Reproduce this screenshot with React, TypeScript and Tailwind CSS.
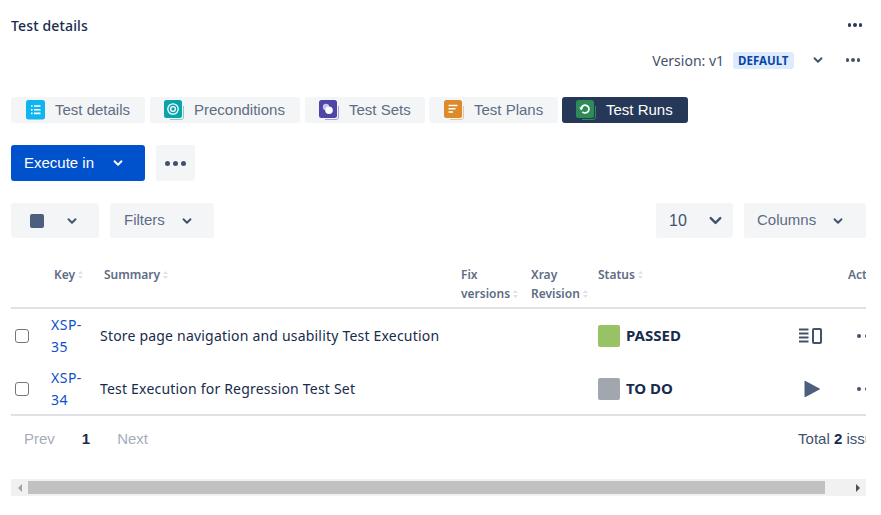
import { ChevronDown } from "lucide-react";

const uiFont = "font-['Liberation_Sans',Arial,sans-serif]";
const bodyFont = "font-['Noto_Sans','Open_Sans',sans-serif]";

function Dots({ className = "" }: { className?: string }) {
  return (
    <span className={`flex items-center gap-[2px] ${className}`}>
      <i className="block w-[3.5px] h-[3.5px] rounded-full bg-current" />
      <i className="block w-[3.5px] h-[3.5px] rounded-full bg-current" />
      <i className="block w-[3.5px] h-[3.5px] rounded-full bg-current" />
    </span>
  );
}

function Chevron({ className = "" }: { className?: string }) {
  return <ChevronDown className={`w-[14px] h-[14px] ${className}`} strokeWidth={3.2} />;
}

function SortArrows() {
  return (
    <svg width="7" height="10" viewBox="0 0 7 10" className="inline-block ml-[2px] align-[-1px]">
      <path d="M3.5 1 L6 4 H1 Z" fill="#dfe1e6" />
      <path d="M3.5 9 L6 6 H1 Z" fill="#dfe1e6" />
    </svg>
  );
}

function TabIcon({ color, shadow, children }: { color: string; shadow: string; children: React.ReactNode }) {
  return (
    <svg width="21" height="21" viewBox="0 0 21 21" className="shrink-0">
      <path d="M19.5 6 V17 a2.5 2.5 0 0 1 -2.5 2.5 H6" fill="none" stroke={shadow} strokeWidth="1" />
      <rect x="0" y="0" width="18" height="18" rx="2.5" fill={color} />
      {children}
    </svg>
  );
}

const tabs = [
  {
    label: "Test details",
    width: "w-[134px]",
    gap: "gap-[10px]",
    pl: "pl-[15px]",
    icon: (
      <svg width="19" height="20" viewBox="0 0 19 20" className="shrink-0">
        <rect x="0" y="0" width="19" height="19.5" rx="2.5" fill="#0fb5ee" />
        <path d="M5 6h1.6M8 6h6.5M5 9.7h1.6M8 9.7h6.5M5 13.4h1.6M8 13.4h6.5" stroke="#fff" strokeWidth="1.6" />
      </svg>
    ),
  },
  {
    label: "Preconditions",
    width: "w-[150px]",
    gap: "gap-[9px]",
    pl: "pl-[14px]",
    icon: (
      <TabIcon color="#0aa3a8" shadow="#7fcfd2">
        <circle cx="9" cy="9" r="5.2" fill="none" stroke="#fff" strokeWidth="1.3" />
        <circle cx="9" cy="9" r="2.4" fill="none" stroke="#fff" strokeWidth="1.3" />
      </TabIcon>
    ),
  },
  {
    label: "Test Sets",
    width: "w-[120px]",
    gap: "gap-[9px]",
    pl: "pl-[14px]",
    icon: (
      <TabIcon color="#4f46a5" shadow="#a9a4d8">
        <circle cx="7" cy="7" r="3.2" fill="#c9c6ea" />
        <circle cx="10" cy="10.2" r="3.8" fill="#fff" />
      </TabIcon>
    ),
  },
  {
    label: "Test Plans",
    width: "w-[129px]",
    gap: "gap-[9px]",
    pl: "pl-[15px]",
    icon: (
      <TabIcon color="#dc8a2b" shadow="#eec48f">
        <path d="M4.5 5.5h9M4.5 8.7h7M4.5 11.9h4.5" stroke="#fff" strokeWidth="1.5" />
      </TabIcon>
    ),
  },
  {
    label: "Test Runs",
    width: "w-[126px]",
    gap: "gap-[9px]",
    pl: "pl-[14px]",
    active: true,
    icon: (
      <TabIcon color="#2e8b57" shadow="#2e8b57">
        <path d="M5.2 9a3.9 3.9 0 1 1 1.2 2.9" fill="none" stroke="#fff" strokeWidth="1.7" />
        <path d="M3.2 7.6 L7.3 7.6 L5.2 10.4 Z" fill="#fff" />
      </TabIcon>
    ),
  },
];

const rowGrid = "grid grid-cols-[40px_49px_358px_70px_67px_201px_49px_60px] w-[894px]";

function DetailIcon() {
  return (
    <svg width="23" height="16" viewBox="0 0 23 16">
      <path d="M0 1.5h9.5M0 5.5h9.5M0 9.5h9.5M0 13.5h9.5" stroke="#42526e" strokeWidth="2" fill="none" />
      <rect x="14" y="1" width="8" height="14" rx="1" fill="none" stroke="#42526e" strokeWidth="2" />
    </svg>
  );
}

function PlayIcon() {
  return (
    <svg width="18" height="18" viewBox="0 0 18 18">
      <path d="M1.5 1.5 a.7.7 0 0 1 1-.6 L16.5 8.4 a.7.7 0 0 1 0 1.2 L2.5 17.1 a.7.7 0 0 1 -1-.6 Z" fill="#4c5f7d" />
    </svg>
  );
}

const rows = [
  {
    key: ["XSP-", "35"],
    summary: "Store page navigation and usability Test Execution",
    status: "PASSED",
    color: "bg-[#98c364]",
    action: <DetailIcon />,
    actionPl: "pl-[3px]",
  },
  {
    key: ["XSP-", "34"],
    summary: "Test Execution for Regression Test Set",
    status: "TO DO",
    color: "bg-[#a2a6af]",
    action: <PlayIcon />,
    actionPl: "pl-[7px]",
  },
];

export default function App() {
  return (
    <div className={`w-[881px] h-[515px] overflow-hidden bg-white pl-[11px] pr-[15px] ${uiFont}`}>
      {/* header */}
      <div className="h-[52px] pt-[16px] flex items-start justify-between">
        <span className={`text-[14px] leading-[20px] font-medium tracking-[0.15px] text-[#172b4d] ${bodyFont}`}>Test details</span>
        <Dots className="text-[#253858] mr-[4px] mt-[7px]" />
      </div>

      {/* version row */}
      <div className="h-[45px] -mt-[2px] flex items-start justify-end">
        <div className="flex items-center h-[20px]">
          <span className={`text-[14px] text-[#42526e] ${bodyFont}`}>Version: v1</span>
          <span className={`ml-[9px] px-[5px] h-[17px] leading-[17px] rounded-[3px] bg-[#deebff] text-[11.5px] font-bold text-[#0747a6] ${bodyFont}`}>
            DEFAULT
          </span>
          <Chevron className="ml-[17px] text-[#42526e]" />
          <Dots className="ml-[21px] mr-[6px] text-[#42526e]" />
        </div>
      </div>

      {/* tabs */}
      <div className="flex h-[26px] mt-[2px]">
        {tabs.map((t, i) => (
          <div
            key={t.label}
            className={`${t.width} ${t.pl} ${t.gap} flex items-center rounded-[3px] text-[15px] shrink-0 ${
              t.active ? "bg-[#253858] text-white" : "bg-[#f4f5f7] text-[#5e6c84]"
            } ${i === 0 ? "" : i === 4 || i === 3 ? "ml-[4px]" : "ml-[5px]"}`}
          >
            {t.icon}
            <span>{t.label}</span>
          </div>
        ))}
      </div>

      {/* execute */}
      <div className="flex mt-[22px] h-[36px]">
        <button className="w-[134px] h-full rounded-[3px] bg-[#0052cc] text-white text-[15px] flex items-center pl-[13px]">
          Execute in
          <Chevron className="ml-[17px]" />
        </button>
        <button className="ml-[11px] w-[39px] h-full rounded-[3px] bg-[#f4f5f7] flex items-center justify-center gap-[3px]">
          <i className="block w-[5px] h-[5px] rounded-full bg-[#42526e]" />
          <i className="block w-[5px] h-[5px] rounded-full bg-[#42526e]" />
          <i className="block w-[5px] h-[5px] rounded-full bg-[#42526e]" />
        </button>
      </div>

      {/* filters */}
      <div className="flex mt-[22px] h-[35px] text-[15px] text-[#5e6c84]">
        <div className="w-[88px] rounded-[3px] bg-[#f4f5f7] flex items-center pl-[19px]">
          <span className="w-[14px] h-[14px] rounded-[2px] bg-[#4c5f7d]" />
          <Chevron className="ml-[21px] text-[#42526e]" />
        </div>
        <div className="ml-[11px] w-[104px] rounded-[3px] bg-[#f4f5f7] flex items-center pl-[14px]">
          Filters
          <Chevron className="ml-[15px] text-[#42526e]" />
        </div>
        <div className="ml-auto w-[77px] rounded-[3px] bg-[#f4f5f7] flex items-center pl-[13px] text-[#42526e] text-[16px]">
          10
          <ChevronDown className="ml-[19px] w-[19px] h-[19px] text-[#42526e]" strokeWidth={3} />
        </div>
        <div className="ml-[11px] w-[122px] rounded-[3px] bg-[#f4f5f7] flex items-center pl-[13px]">
          Columns
          <Chevron className="ml-[15px] text-[#42526e]" />
        </div>
      </div>

      {/* table */}
      <div className={`overflow-hidden w-[855px] ${bodyFont}`}>
        <div className={`${rowGrid} h-[71px] border-b-2 border-[#dfe1e6] pt-[27px] text-[12px] leading-[19px] font-semibold text-[#5e6c84]`}>
          <div />
          <div className="pl-[3px]">Key<SortArrows /></div>
          <div className="pl-[4px]">Summary<SortArrows /></div>
          <div className="pl-[3px]">Fix<br />versions<SortArrows /></div>
          <div className="pl-[3px]">Xray<br />Revision<SortArrows /></div>
          <div className="pl-[3px]">Status<SortArrows /></div>
          <div />
          <div className="pl-[3px]">Actions</div>
        </div>
        {rows.map((r) => (
          <div key={r.status} className={`${rowGrid} h-[53px] items-center text-[14px] tracking-[0.2px] text-[#172b4d]`}>
            <div className="pl-[4px] flex items-center">
              <input type="checkbox" readOnly className="appearance-none w-[14px] h-[14px] rounded-[3px] border border-[#767676] bg-white" />
            </div>
            <div className="leading-[22px] tracking-[0.5px] text-[#0b4fc9]">
              {r.key[0]}
              <br />
              {r.key[1]}
            </div>
            <div className="whitespace-nowrap">{r.summary}</div>
            <div />
            <div />
            <div className="pl-[3px] flex items-center gap-[6px]">
              <span className={`w-[22px] h-[22px] rounded-[2px] ${r.color}`} />
              <span className="font-bold text-[15px] tracking-normal">{r.status}</span>
            </div>
            <div className={`${r.actionPl} flex items-center`}>{r.action}</div>
            <div className="pl-[12px] flex items-center gap-[4px]">
              <i className="block w-[4px] h-[4px] rounded-full bg-[#42526e]" />
              <i className="block w-[4px] h-[4px] rounded-full bg-[#42526e]" />
              <i className="block w-[4px] h-[4px] rounded-full bg-[#42526e]" />
            </div>
          </div>
        ))}
      </div>

      {/* pagination */}
      <div className="w-[855px] h-[49px] border-t-2 border-[#dfe1e6] -mt-[1px] flex items-center text-[15px] overflow-hidden">
        <span className="ml-[13px] text-[#a5adba]">Prev</span>
        <span className="ml-[27px] font-bold text-[#172b4d]">1</span>
        <span className="ml-[27px] text-[#a5adba]">Next</span>
        <span className="ml-auto -mr-[23px] whitespace-nowrap text-[#42526e]">
          Total <b className="text-[#172b4d]">2</b> issues
        </span>
      </div>

      {/* horizontal scrollbar */}
      <div className="mt-[16px] w-[855px] h-[17px] bg-[#f1f1f1] flex items-center">
        <div className="w-[17px] h-full flex items-center justify-center">
          <span className="border-y-[4px] border-y-transparent border-r-[4px] border-r-[#a3a3a3]" />
        </div>
        <div className="w-[797px] h-[13px] bg-[#c1c1c1]" />
        <div className="ml-auto w-[17px] h-full flex items-center justify-center">
          <span className="border-y-[4px] border-y-transparent border-l-[4px] border-l-[#505050]" />
        </div>
      </div>
    </div>
  );
}
